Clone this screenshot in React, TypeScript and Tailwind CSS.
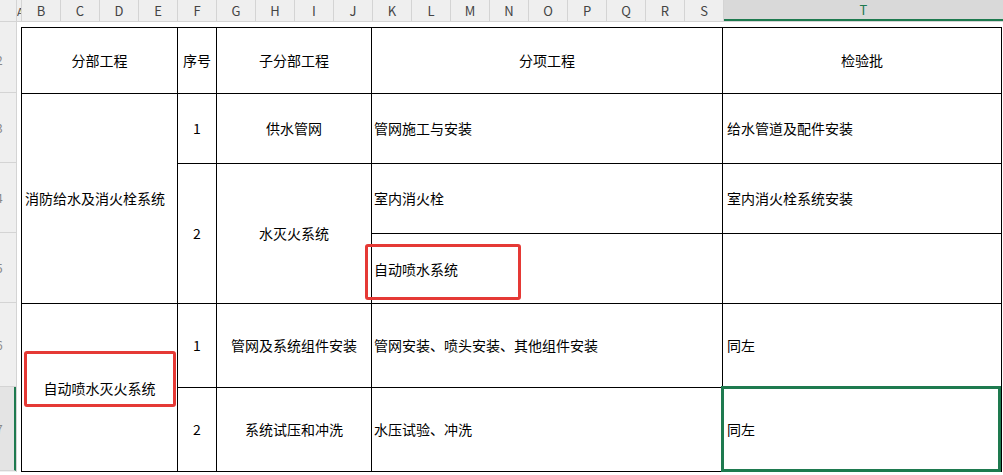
const cols = ["B", "C", "D", "E", "F", "G", "H", "I", "J", "K", "L", "M", "N", "O", "P", "Q", "R", "S"];
const rows = [
  { n: "2", h: 66 },
  { n: "3", h: 70 },
  { n: "4", h: 70 },
  { n: "5", h: 70 },
  { n: "6", h: 84 },
  { n: "7", h: 84 },
];

const cell = "border border-black";

export default function App() {
  return (
    <div className="relative w-[1003px] h-[475px] overflow-hidden bg-white text-[14px] text-black" style={{ fontFamily: '"Noto Sans CJK SC", "Liberation Sans", sans-serif' }}>
      {/* column header */}
      <div className="flex h-[22px] bg-[#efefef] border-b border-[#d4d4d4] text-[13px] text-[#444]">
        <div className="w-[17px] shrink-0 border-r border-[#d4d4d4]" />
        <div className="w-[5px] shrink-0 border-r border-[#d4d4d4] overflow-hidden text-[11px] leading-[22px]">A</div>
        {cols.map((c) => (
          <div key={c} className="w-[39px] shrink-0 border-r border-[#d4d4d4] flex items-center justify-center">{c}</div>
        ))}
        <div className="flex-1 flex items-center justify-center bg-[#d9d9d9] border-b-2 border-[#1e7a4f] text-[#1e7a4f]">T</div>
      </div>
      <div className="flex">
        {/* row header */}
        <div className="w-[17px] shrink-0 bg-[#efefef] border-r border-[#d4d4d4] text-[12px] text-[#888]">
          <div className="h-[5px]" />
          {rows.map((r, i) => (
            <div key={r.n} style={{ height: r.h }} className={`flex items-center justify-start border-b border-[#d4d4d4] overflow-hidden ${i === 5 ? "border-r-2 border-r-[#1e7a4f] bg-[#e4e4e4]" : ""}`}>
              <span className="-ml-[4px]">{r.n}</span>
            </div>
          ))}
        </div>
        <div className="pl-[4px] pt-[5px]">
          <table className="border-collapse text-center">
            <colgroup>
              <col className="w-[156px]" />
              <col className="w-[39px]" />
              <col className="w-[155px]" />
              <col className="w-[351px]" />
              <col className="w-[279px]" />
            </colgroup>
            <tbody>
              <tr className="h-[66px]">
                <td className={cell}>分部工程</td>
                <td className={cell}>序号</td>
                <td className={cell}>子分部工程</td>
                <td className={cell}>分项工程</td>
                <td className={cell}>检验批</td>
              </tr>
              <tr className="h-[70px]">
                <td className={`${cell} text-left pl-[3px]`} rowSpan={3}>消防给水及消火栓系统</td>
                <td className={cell}>1</td>
                <td className={cell}>供水管网</td>
                <td className={`${cell} text-left pl-[2px]`}>管网施工与安装</td>
                <td className={`${cell} text-left pl-[4px]`}>给水管道及配件安装</td>
              </tr>
              <tr className="h-[70px]">
                <td className={cell} rowSpan={2}>2</td>
                <td className={cell} rowSpan={2}>水灭火系统</td>
                <td className={`${cell} text-left pl-[2px]`}>室内消火栓</td>
                <td className={`${cell} text-left pl-[4px]`}>室内消火栓系统安装</td>
              </tr>
              <tr className="h-[70px]">
                <td className={`${cell} text-left pl-[2px] pt-[1px]`}>自动喷水系统</td>
                <td className={cell} />
              </tr>
              <tr className="h-[84px]">
                <td className={`${cell} pt-[2px]`} rowSpan={2}>自动喷水灭火系统</td>
                <td className={cell}>1</td>
                <td className={cell}>管网及系统组件安装</td>
                <td className={`${cell} text-left pl-[2px]`}>管网安装、喷头安装、其他组件安装</td>
                <td className={`${cell} text-left pl-[4px]`}>同左</td>
              </tr>
              <tr className="h-[84px]">
                <td className={cell}>2</td>
                <td className={cell}>系统试压和冲洗</td>
                <td className={`${cell} text-left pl-[2px]`}>水压试验、冲洗</td>
                <td className={`${cell} text-left pl-[4px]`}>同左</td>
              </tr>
            </tbody>
          </table>
        </div>
      </div>
      {/* overlays */}
      <div className="absolute left-[365px] top-[244px] w-[156px] h-[56px] border-[3px] border-[#e53935] rounded-[3px]" />
      <div className="absolute left-[24px] top-[351px] w-[152px] h-[56px] border-[3px] border-[#e53935] rounded-[3px]" />
      <div className="absolute left-[721px] top-[386px] w-[280px] h-[86px] border-[3px] border-[#1e7a4f]" />
    </div>
  );
}
